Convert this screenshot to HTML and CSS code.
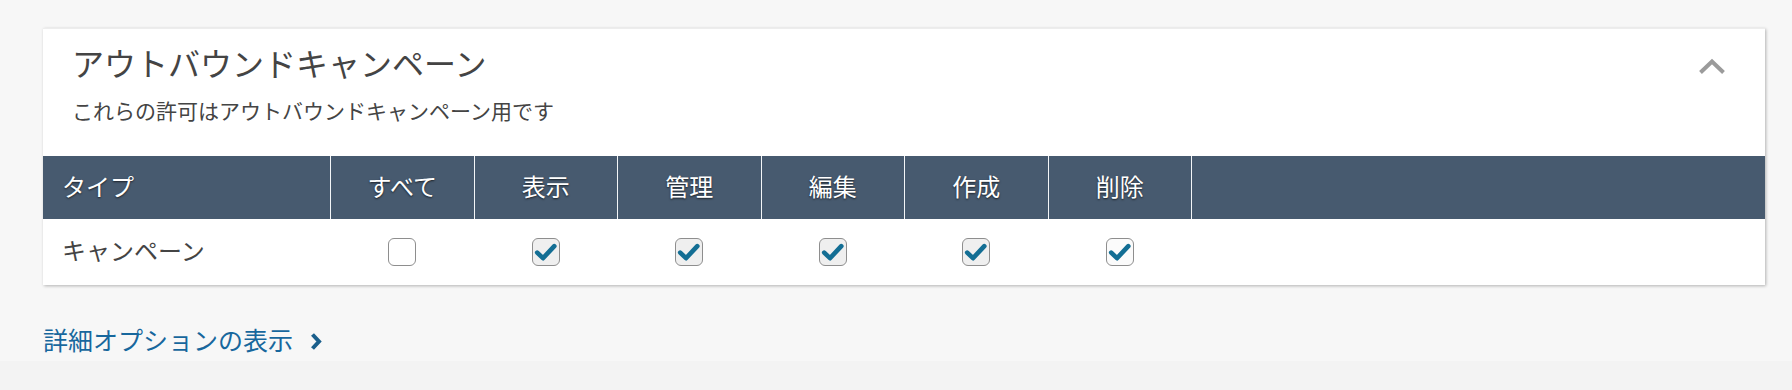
FILE: index.html
```html
<!DOCTYPE html>
<html lang="ja">
<head>
<meta charset="utf-8">
<title>アウトバウンドキャンペーン</title>
<link rel="stylesheet" href="styles.css">
</head>
<body>
<div class="page">
  <section class="card">
    <div class="card-head">
      <div class="head-text">
        <h2 class="title">アウトバウンドキャンペーン</h2>
        <p class="subtitle">これらの許可はアウトバウンドキャンペーン用です</p>
      </div>
      <button class="collapse" aria-label="折りたたむ">
        <svg width="28" height="18" viewBox="0 0 28 18"><polyline points="2.5,15.5 14,4.5 25.5,15.5" fill="none" stroke="#9b9b9b" stroke-width="4"/></svg>
      </button>
    </div>
    <div class="perm-table">
      <div class="row head">
        <div class="cell first">タイプ</div>
        <div class="cell">すべて</div>
        <div class="cell">表示</div>
        <div class="cell">管理</div>
        <div class="cell">編集</div>
        <div class="cell">作成</div>
        <div class="cell">削除</div>
        <div class="cell rest"></div>
      </div>
      <div class="row body">
        <div class="cell first">キャンペーン</div>
        <div class="cell"><span class="check"></span></div>
        <div class="cell"><span class="check on"><svg width="28" height="28" viewBox="0 0 28 28"><path d="M5.2 14.6 L11 20.2 L22.3 8.2" fill="none" stroke="#136e94" stroke-width="4.6" stroke-linecap="round" stroke-linejoin="round"/></svg></span></div>
        <div class="cell"><span class="check on"><svg width="28" height="28" viewBox="0 0 28 28"><path d="M5.2 14.6 L11 20.2 L22.3 8.2" fill="none" stroke="#136e94" stroke-width="4.6" stroke-linecap="round" stroke-linejoin="round"/></svg></span></div>
        <div class="cell"><span class="check on"><svg width="28" height="28" viewBox="0 0 28 28"><path d="M5.2 14.6 L11 20.2 L22.3 8.2" fill="none" stroke="#136e94" stroke-width="4.6" stroke-linecap="round" stroke-linejoin="round"/></svg></span></div>
        <div class="cell"><span class="check on"><svg width="28" height="28" viewBox="0 0 28 28"><path d="M5.2 14.6 L11 20.2 L22.3 8.2" fill="none" stroke="#136e94" stroke-width="4.6" stroke-linecap="round" stroke-linejoin="round"/></svg></span></div>
        <div class="cell"><span class="check on white"><svg width="28" height="28" viewBox="0 0 28 28"><path d="M5.2 14.6 L11 20.2 L22.3 8.2" fill="none" stroke="#136e94" stroke-width="4.6" stroke-linecap="round" stroke-linejoin="round"/></svg></span></div>
        <div class="cell rest"></div>
      </div>
    </div>
  </section>
  <a class="more" href="#">詳細オプションの表示<svg width="13" height="19" viewBox="0 0 13 19"><polyline points="2.5,2.5 9,9.5 2.5,16.5" fill="none" stroke="#1a5f8c" stroke-width="4"/></svg></a>
</div>
</body>
</html>
```
FILE: styles.css
```css
html, body {
  margin: 0;
  padding: 0;
}
body {
  background: #f3f3f3;
  font-family: "Noto Sans CJK JP", "Noto Sans", sans-serif;
  color: #444;
}
.page {
  background: #f7f7f7;
  padding: 29px 27px 6px 43px;
}
.card {
  background: #fff;
  box-shadow: 1px 1px 3px rgba(0, 0, 0, 0.28);
  border-top: 1px solid #ededed;
  margin-top: -1px;
}
.card-head {
  display: flex;
  justify-content: space-between;
  align-items: flex-start;
  padding: 13px 39px 32px 29px;
}
.title {
  margin: 0;
  font-size: 32px;
  line-height: 40px;
  font-weight: 400;
  color: #444;
}
.subtitle {
  margin: 14px 0 0;
  font-size: 21px;
  line-height: 28px;
  color: #444;
}
.collapse {
  border: 0;
  background: none;
  padding: 0;
  margin-top: 15px;
  display: flex;
}
.perm-table {
  display: flex;
  flex-direction: column;
}
.row {
  display: grid;
  grid-template-columns: 2fr repeat(6, 1fr) 4fr;
}
.row.head {
  background: #475a6f;
  height: 63px;
}
.row.head .cell {
  color: #fff;
  font-size: 24px;
  text-shadow: 0 1px 2px rgba(0, 0, 0, 0.65);
  padding-bottom: 4px;
}
.row.head .cell + .cell {
  border-left: 1px solid #f4f6f8;
}
.row.body {
  height: 66px;
}
.cell {
  display: flex;
  align-items: center;
  justify-content: center;
  box-sizing: border-box;
  font-size: 24px;
  line-height: 32px;
}
.cell.first {
  justify-content: flex-start;
  padding-left: 19px;
}
.row.body .cell.first {
  padding-bottom: 5px;
  color: #444;
}
.check {
  box-sizing: border-box;
  width: 28px;
  height: 28px;
  border: 1px solid #8e8e8e;
  border-radius: 6px;
  background: #fff;
  display: flex;
  align-items: center;
  justify-content: center;
  margin-left: 1px;
}
.check.on {
  background: #efefef;
}
.check.on.white {
  background: #fbfbfb;
}
.check svg {
  display: block;
  margin: -1px;
}
.more {
  display: inline-flex;
  align-items: center;
  gap: 17px;
  margin-top: 38px;
  font-size: 25px;
  line-height: 32px;
  color: #17679d;
  text-decoration: none;
}
.more svg {
  display: block;
  margin-top: 5px;
}
```
